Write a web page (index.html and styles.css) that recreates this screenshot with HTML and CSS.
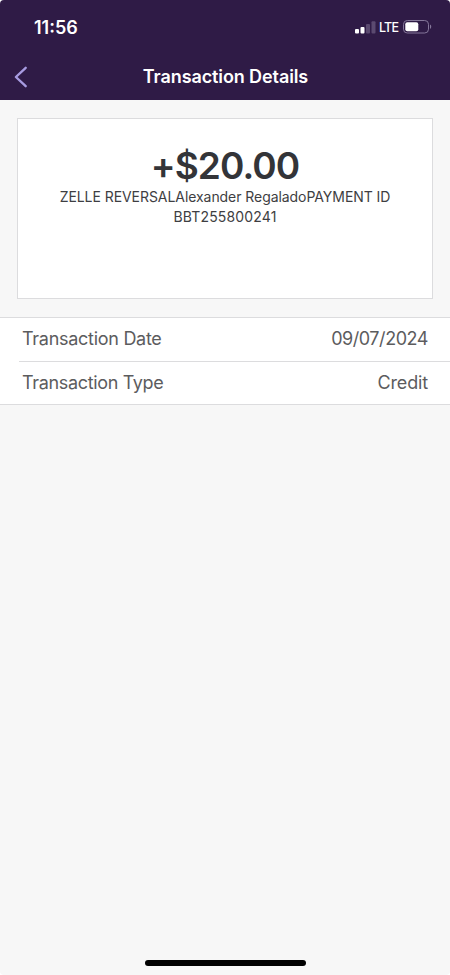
FILE: index.html
```html
<!DOCTYPE html>
<html lang="en">
<head>
<meta charset="utf-8">
<title>Transaction Details</title>
<link rel="stylesheet" href="styles.css">
</head>
<body>
<div class="screen">
  <header class="header">
    <div class="status">
      <span class="time">11:56</span>
      <div class="indicators">
        <svg class="signal" width="21" height="14" viewBox="0 0 21 14">
          <rect x="0" y="9" width="4" height="4.5" rx="1" fill="#fff"/>
          <rect x="5.5" y="7" width="4" height="6.5" rx="1" fill="#fff"/>
          <rect x="11" y="4" width="4" height="9.5" rx="1" fill="#5b4a70"/>
          <rect x="16.5" y="1.2" width="4" height="12.3" rx="1" fill="#5b4a70"/>
        </svg>
        <span class="network">LTE</span>
        <svg class="battery" width="29" height="14" viewBox="0 0 29 14">
          <rect x="0.5" y="0.5" width="25" height="12.5" rx="3.8" fill="none" stroke="#85779a"/>
          <rect x="2.3" y="2.3" width="13" height="9" rx="2" fill="#fff"/>
          <path d="M27 4.6c1.7.7 1.7 3.6 0 4.3z" fill="#85779a"/>
        </svg>
      </div>
    </div>
    <nav class="nav">
      <svg class="back" width="14" height="22" viewBox="0 0 14 22">
        <path d="M11.7 1.8 1.9 11 11.7 20.2" fill="none" stroke="#a79be0" stroke-width="2.4" stroke-linecap="round" stroke-linejoin="round"/>
      </svg>
      <h1 class="title">Transaction Details</h1>
    </nav>
  </header>
  <main class="content">
    <section class="card">
      <div class="amount">+$20.00</div>
      <p class="memo"><span class="memo-first">ZELLE REVERSALAlexander RegaladoPAYMENT ID</span><br><span class="memo-second">BBT255800241</span></p>
    </section>
    <dl class="details">
      <div class="row"><dt class="label-date">Transaction Date</dt><dd class="value-date">09/07/2024</dd></div>
      <div class="row"><dt class="label-type">Transaction Type</dt><dd class="value-type">Credit</dd></div>
    </dl>
  </main>
  <div class="home"></div>
</div>
</body>
</html>
```
FILE: styles.css
```css
* { box-sizing: border-box; margin: 0; padding: 0; }
body { background: #fff; font-family: Inter, "Liberation Sans", sans-serif; }
.screen {
  display: flex; flex-direction: column;
  width: 450px; height: 975px; overflow: hidden;
  background: #f7f7f7; border-radius: 4px;
}
.header { height: 100px; background: #2f1b46; color: #fff; }
.status {
  display: flex; justify-content: space-between; align-items: center;
  height: 54px; padding: 0 18px 0 34px;
}
.time { margin-top: 2px; font-size: 18px; font-weight: 600; line-height: 20px; letter-spacing: 0; }
.indicators { display: flex; align-items: center; }
.network { width: 20px; margin: 2px 4px 0 3px; font-size: 12.5px; font-weight: 500; line-height: 14px; letter-spacing: -0.8px; }
.nav { display: flex; align-items: center; height: 46px; padding: 0 14px; }
.title { flex: 1; margin-right: 13px; text-align: center; font-size: 18px; font-weight: 600; line-height: 24px; letter-spacing: -0.1px; }
.content { flex: 1; padding-top: 18px; }
.card {
  height: 181px; margin: 0 17px 18px; padding-top: 26px;
  background: #fff; border: 1px solid #dcdcde; text-align: center; color: #333438;
}
.amount { font-size: 37px; font-weight: 600; line-height: 42px; letter-spacing: -0.9px; }
.memo { font-size: 14px; line-height: 20px; color: #3e3e42; }
.memo-first { letter-spacing: -0.06px; }
.memo-second { letter-spacing: 0.15px; }
.details { background: #fff; border-top: 1px solid #dcdcde; border-bottom: 1px solid #dcdcde; }
.row {
  display: flex; justify-content: space-between; align-items: center;
  height: 43px; margin-left: 19px; padding: 0 22px 1px 3px;
  font-size: 18px; line-height: 24px; color: #5c5c5e;
}
.row + .row { height: 44px; margin-bottom: -1px; border-top: 1px solid #dcdcde; }
.label-date { letter-spacing: -0.28px; }
.label-type { letter-spacing: -0.34px; }
.value-date { letter-spacing: -0.45px; }
.value-type { letter-spacing: -0.15px; }
.home { width: 161px; height: 6px; margin: 0 auto 9px; border-radius: 3px; background: #000; }
```
